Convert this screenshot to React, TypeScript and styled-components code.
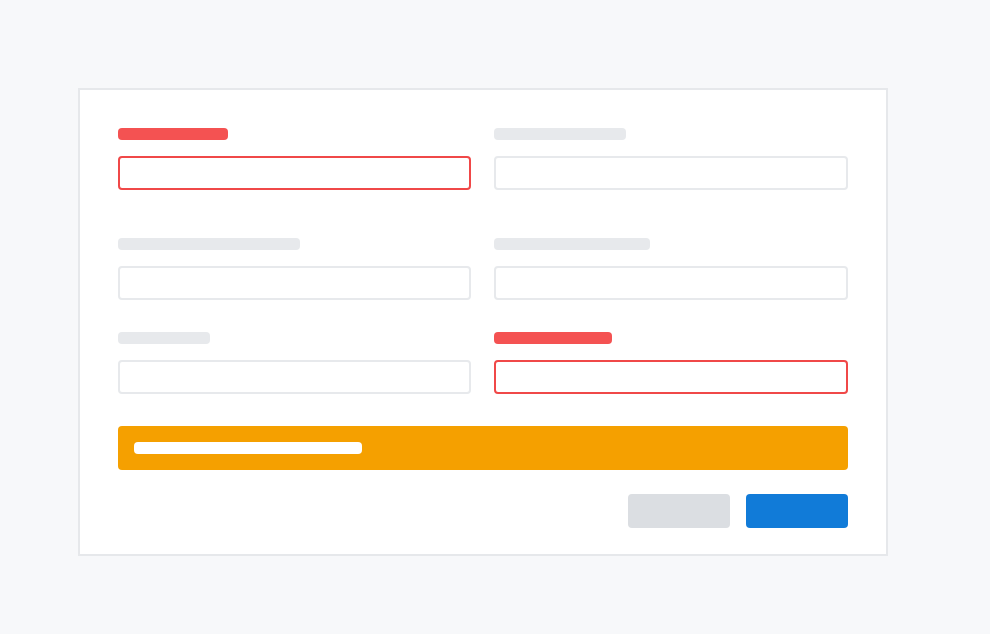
import React from "react";
import styled, { createGlobalStyle } from "styled-components";

const Global = createGlobalStyle`
  html, body { margin: 0; padding: 0; background: #f7f8fa; font-family: "Inter", "Liberation Sans", sans-serif; }
  * { box-sizing: border-box; }
`;

const Page = styled.div`
  min-height: 634px;
  padding: 88px 0 0 78px;
`;

const Card = styled.div`
  width: 810px;
  height: 468px;
  background: #ffffff;
  border: 2px solid #e6e8eb;
  padding: 38px 38px 26px;
  display: flex;
  flex-direction: column;
`;

const Grid = styled.div`
  display: grid;
  grid-template-columns: 353px 354px;
  column-gap: 23px;
`;

const Field = styled.div<{ $mt: number }>`
  display: flex;
  flex-direction: column;
  gap: 16px;
  margin-top: ${(p) => p.$mt}px;
`;

const Label = styled.div<{ $w: number; $error?: boolean }>`
  width: ${(p) => p.$w}px;
  height: 12px;
  border-radius: 4px;
  background: ${(p) => (p.$error ? "#f45252" : "#e7e9ec")};
`;

const Input = styled.div<{ $error?: boolean }>`
  height: 34px;
  border-radius: 4px;
  border: 2px solid ${(p) => (p.$error ? "#f04848" : "#e7e9ec")};
  background: #fff;
`;

const Banner = styled.div`
  margin-top: 32px;
  height: 44px;
  border-radius: 4px;
  background: #f5a000;
  display: flex;
  align-items: center;
  padding: 0 16px;
`;

const BannerText = styled.div`
  width: 228px;
  height: 12px;
  border-radius: 4px;
  background: #ffffff;
`;

const Actions = styled.div`
  margin-top: 24px;
  display: flex;
  justify-content: flex-end;
  gap: 16px;
`;

const Button = styled.div<{ $primary?: boolean }>`
  width: 102px;
  height: 34px;
  border-radius: 4px;
  background: ${(p) => (p.$primary ? "#117bd8" : "#dbdee2")};
`;

const rows = [
  { mt: 0, fields: [{ w: 110, error: true }, { w: 132 }] },
  { mt: 48, fields: [{ w: 182 }, { w: 156 }] },
  { mt: 32, fields: [{ w: 92 }, { w: 118, error: true }] },
];

export default function App() {
  return (
    <>
      <Global />
      <Page>
        <Card>
          <Grid>
            {rows.map((r, i) =>
              r.fields.map((f, j) => (
                <Field key={`${i}-${j}`} $mt={r.mt}>
                  <Label $w={f.w} $error={f.error} />
                  <Input $error={f.error} />
                </Field>
              ))
            )}
          </Grid>
          <Banner>
            <BannerText />
          </Banner>
          <Actions>
            <Button />
            <Button $primary />
          </Actions>
        </Card>
      </Page>
    </>
  );
}
